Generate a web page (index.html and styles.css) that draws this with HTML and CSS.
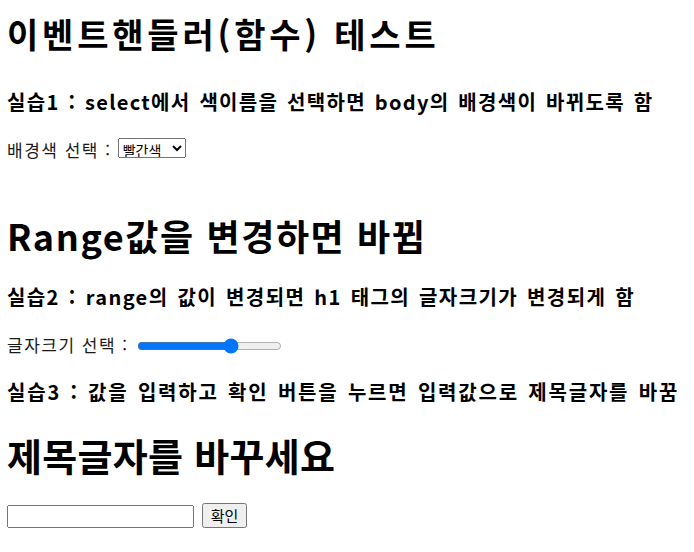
FILE: index.html
```html
<!DOCTYPE html>
<html lang="ko">
<head>
    <meta charset="UTF-8">
    <meta name="viewport" content="width=device-width, initial-scale=1.0">
    <title>이벤트핸들러 테스트</title>
    <link rel="stylesheet" href="styles.css">
</head>
<body>
    <h1 class="title title-main">이벤트핸들러(함수) 테스트</h1>

    <h3 class="task task-one">실습1 : select에서 색이름을 선택하면 body의 배경색이 바뀌도록 함</h3>
    <p class="row">
        배경색 선택 :
        <select id="bg-color" class="color-select">
            <option value="red">빨간색</option>
            <option value="green">초록색</option>
            <option value="blue">파란색</option>
        </select>
    </p>

    <h1 class="title title-range" id="range-title">Range값을 변경하면 바뀜</h1>

    <h3 class="task task-two">실습2 : range의 값이 변경되면 h1 태그의 글자크기가 변경되게 함</h3>
    <p class="row">
        글자크기 선택 :
        <input type="range" id="font-size" class="size-range" min="10" max="100" value="70">
    </p>

    <h3 class="task task-three">실습3 : 값을 입력하고 확인 버튼을 누르면 입력값으로 제목글자를 바꿈</h3>
    <h1 class="title title-change" id="change-title">제목글자를 바꾸세요</h1>
    <div class="row form-row">
        <input type="text" id="title-input" class="title-input">
        <button class="ok-btn" onclick="changeTitle()">확인</button>
    </div>

    <script>
        document.getElementById("bg-color").addEventListener("change", function () {
            document.body.style.backgroundColor = this.value;
        });

        document.getElementById("font-size").addEventListener("input", function () {
            document.getElementById("range-title").style.fontSize = this.value + "px";
        });

        function changeTitle() {
            let text = document.getElementById("title-input").value;
            if (text) {
                document.getElementById("change-title").innerText = text;
            }
        }
    </script>
</body>
</html>
```

FILE: styles.css
```css
body {
    margin: 0;
    padding: 10px 7px 8px;
    font-family: "Noto Sans CJK KR", "Noto Sans", sans-serif;
    color: #000;
    background: #fff;
}
.title {
    font-size: 36px;
    line-height: 48px;
    letter-spacing: 1.6px;
    font-weight: bold;
    margin: 24px 0 0;
}
.title-main {
    margin-top: 0;
    font-size: 34px;
    letter-spacing: 3.8px;
}
.title-range {
    margin-top: 48px;
}
.title-change {
    font-size: 38px;
    letter-spacing: 0.3px;
}
.task {
    font-size: 20px;
    line-height: 30px;
    letter-spacing: 1.4px;
    word-spacing: 2px;
    font-weight: bold;
    margin: 23px 0 0;
}
.task-one {
    margin-top: 29px;
    letter-spacing: 1.3px;
}
.task-three {
    margin-top: 19px;
    letter-spacing: 1.8px;
}
.row {
    font-size: 17px;
    line-height: 26px;
    letter-spacing: 1.5px;
    margin: 20px 0 0;
    color: #1a1a1a;
}
.color-select {
    width: 68px;
    height: 20px;
    padding: 0;
    font-size: 14px;
    letter-spacing: 0;
    font-family: inherit;
    vertical-align: 1px;
}
.size-range {
    width: 145px;
    height: 16px;
    margin: 0 0 0 2px;
    vertical-align: -2px;
}
.form-row {
    display: flex;
    align-items: flex-end;
    gap: 8px;
    margin-top: 24px;
}
.title-input {
    width: 187px;
    height: 23px;
    margin: 0;
    box-sizing: border-box;
}
.ok-btn {
    width: 45px;
    height: 25px;
    margin: 0;
    padding: 0;
    font-size: 15px;
    letter-spacing: 0;
    font-family: inherit;
}
```
